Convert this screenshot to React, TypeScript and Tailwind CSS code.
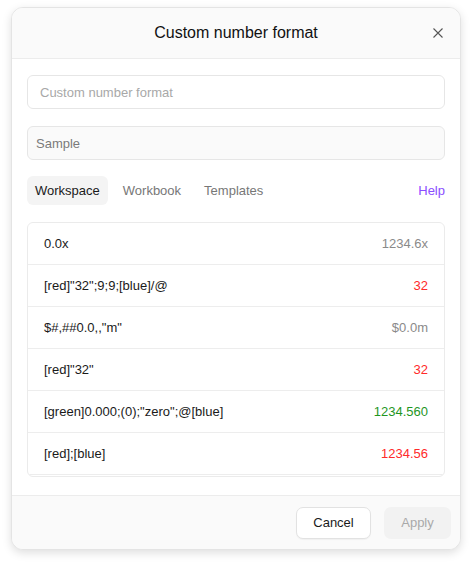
import React from 'react';

const rows = [
  { format: '0.0x', sample: '1234.6x', color: 'text-[#8a8a8a]' },
  { format: '[red]"32";9;9;[blue]/@', sample: '32', color: 'text-[#ff2a2a]' },
  { format: '$#,##0.0,,"m"', sample: '$0.0m', color: 'text-[#8a8a8a]' },
  { format: '[red]"32"', sample: '32', color: 'text-[#ff2a2a]' },
  { format: '[green]0.000;(0);"zero";@[blue]', sample: '1234.560', color: 'text-[#1f961f]' },
  { format: '[red];[blue]', sample: '1234.56', color: 'text-[#ff2a2a]' },
];

const App = () => {
  return (
    <div className="min-h-screen bg-white pt-[7px] pl-[11px]" style={{ fontFamily: '"Liberation Sans", Arial, sans-serif' }}>
      <div className="w-[450px] h-[543px] bg-white rounded-[12px] border border-[#e4e4e4] shadow-[0_3px_10px_rgba(0,0,0,0.13)] flex flex-col overflow-hidden">
        <div className="h-[51px] shrink-0 bg-[#fafafa] border-b border-[#ececec] relative flex items-center justify-center">
          <h1 className="text-[16px] text-[#111]">Custom number format</h1>
          <button className="absolute right-[17px] top-[20px] w-[10px] h-[10px] flex items-center justify-center text-[#555]">
            <svg width="10" height="10" viewBox="0 0 10 10" fill="none" stroke="currentColor" strokeWidth="1.1">
              <path d="M0.5 0.5L9.5 9.5M9.5 0.5L0.5 9.5" />
            </svg>
          </button>
        </div>

        <div className="flex-1 px-[15px] pt-[16px] flex flex-col">
          <input
            placeholder="Custom number format"
            className="h-[34px] w-full rounded-[6px] border border-[#e6e6e6] bg-white px-[12px] text-[13px] placeholder:text-[#a8a8a8] outline-none"
          />
          <input
            placeholder="Sample"
            className="mt-[17px] h-[34px] w-full rounded-[6px] border border-[#e6e6e6] bg-[#fafafa] px-[8px] text-[13px] placeholder:text-[#7a7a7a] outline-none"
          />

          <div className="mt-[16px] h-[29px] flex items-center gap-[7px]">
            <button className="h-[29px] px-[8px] rounded-[6px] bg-[#f4f4f4] text-[13px] text-[#1a1a1a]">Workspace</button>
            <button className="h-[29px] px-[8px] text-[13px] text-[#777]">Workbook</button>
            <button className="h-[29px] px-[8px] text-[13px] text-[#777]">Templates</button>
            <a className="ml-auto text-[13px] text-[#8b4dff]">Help</a>
          </div>

          <div className="mt-[17px] h-[255px] rounded-[6px] border border-[#ebebeb] overflow-hidden">
            {rows.map((r, i) => (
              <div key={i} className="h-[42px] flex items-center justify-between px-[16px] border-b border-[#ededed] text-[13px]">
                <span className="text-[#1a1a1a]">{r.format}</span>
                <span className={r.color}>{r.sample}</span>
              </div>
            ))}
            <div className="h-[42px]" />
          </div>
        </div>

        <div className="h-[54px] shrink-0 bg-[#fafafa] border-t border-[#ececec] flex items-center justify-end gap-[13px] pr-[9px]">
          <button className="h-[32px] w-[75px] rounded-[7px] border border-[#e2e2e2] bg-white text-[13px] text-[#1a1a1a] shadow-[0_1px_1px_rgba(0,0,0,0.04)]">Cancel</button>
          <button className="h-[32px] w-[67px] rounded-[7px] bg-[#f2f2f2] text-[13px] text-[#a9a9a9]">Apply</button>
        </div>
      </div>
    </div>
  );
};

export default App;
